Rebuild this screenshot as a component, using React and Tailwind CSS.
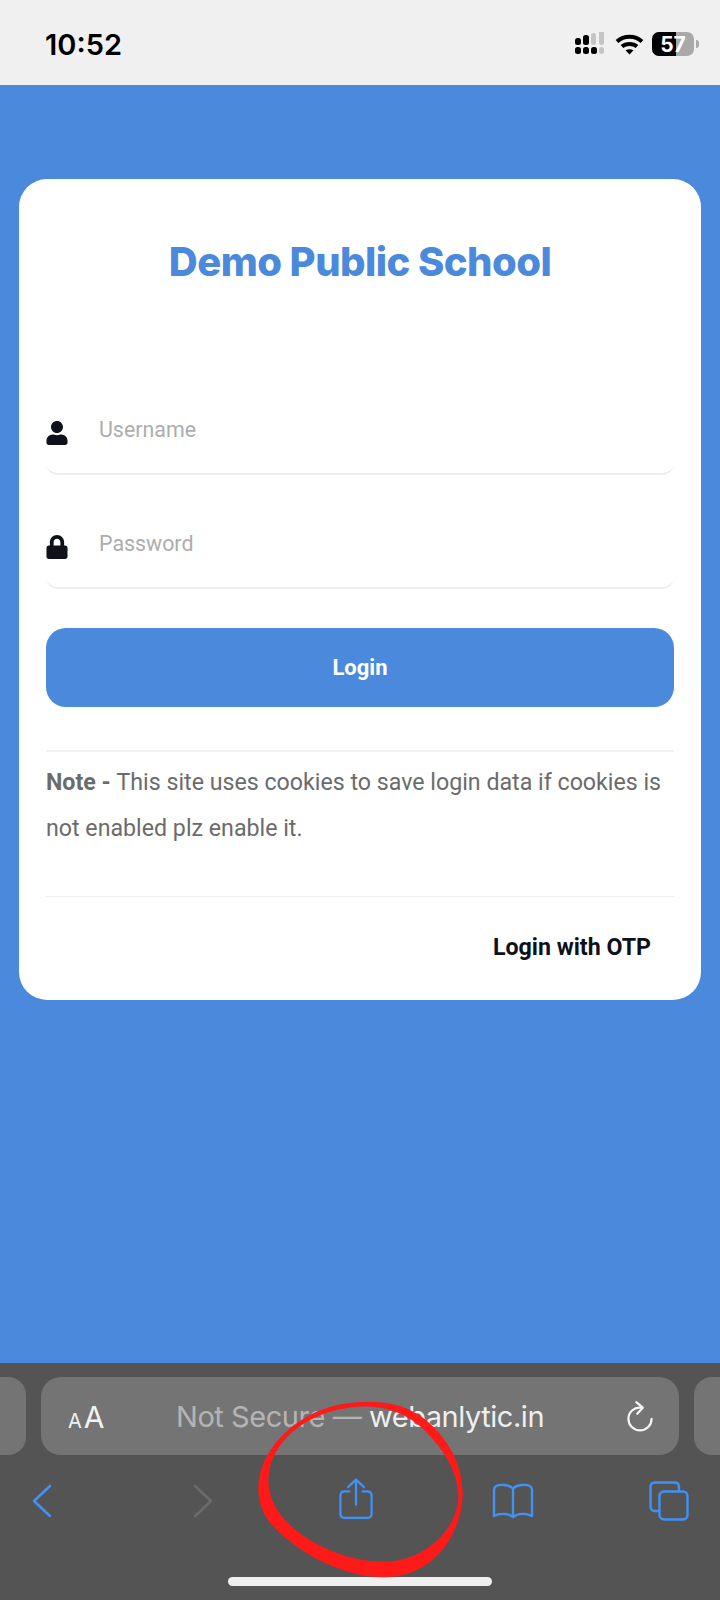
import React from "react";
import { FaUser, FaLock } from "react-icons/fa";

function StatusIcons() {
  return (
    <div className="flex items-center">
      <svg width="32" height="24" viewBox="0 0 32 24" className="mr-[9px]">
        <g fill="#000">
          <rect x="1" y="15" width="6" height="7" rx="2.5" />
          <rect x="9" y="15" width="6" height="7" rx="2.5" />
          <rect x="17" y="15" width="6" height="7" rx="2.5" />
          <rect x="1" y="6" width="6" height="7" rx="2.5" />
          <rect x="9" y="3" width="6" height="10" rx="2.5" />
        </g>
        <g fill="#c4c4c4">
          <rect x="17" y="1" width="5" height="12" rx="2.5" />
          <rect x="25" y="-2" width="5" height="15" rx="2.5" />
          <rect x="25" y="15" width="5" height="7" rx="2.5" />
        </g>
      </svg>
      <svg width="29" height="21" viewBox="0 0 29 21" className="mr-[8px]" fill="none" stroke="#000" strokeWidth="4">
        <path d="M2 7.5C9 1 20 1 27 7.5" />
        <path d="M7 12.5C11 9 18 9 22 12.5" />
        <path d="M14.5 20.5L10.5 16.3C13 14.8 16 14.8 18.5 16.3Z" fill="#000" stroke="none" />
      </svg>
      <div className="relative w-[42px] h-[24px] rounded-[7px] bg-[#a9a9a9] overflow-hidden">
        <div className="w-[24px] h-full bg-black" />
        <span className="absolute inset-0 flex items-center justify-center text-white text-[21px] font-bold font-['Inter',sans-serif] leading-none">57</span>
      </div>
      <div className="ml-[2px] w-[3px] h-[8px] rounded-r-full bg-[#a9a9a9]" />
    </div>
  );
}

function Field({ icon, placeholder, className }) {
  return (
    <div className={`flex items-center h-[88px] border-b-2 border-[#eeeeee] rounded-[12px] ${className}`}>
      <span className="w-[54px] -ml-[1px] mt-[6px] text-[#0f111a] text-[24px]">{icon}</span>
      <input
        placeholder={placeholder}
        readOnly
        className="flex-1 min-w-0 bg-transparent outline-none text-[21.4px] placeholder:text-[#adadad] font-['Roboto',sans-serif]"
      />
    </div>
  );
}

export default function App() {
  return (
    <div className="relative h-[1600px] w-[720px] overflow-hidden flex flex-col bg-[#4a89dc] font-['Roboto',sans-serif]">
      <header className="h-[85px] shrink-0 bg-[#f0f0f0] flex items-center justify-between pl-[45px] pr-[21px] pt-[3px]">
        <span className="text-[29px] font-semibold text-black font-['Inter',sans-serif] leading-none">10:52</span>
        <StatusIcons />
      </header>

      <main className="flex-1 min-h-0 pt-[94px] px-[19px]">
        <section className="h-[821px] bg-white rounded-[28px] px-[27px] pt-[53px]">
          <h1 className="text-center text-[40px] leading-[60px] font-extrabold tracking-[-0.55px] whitespace-nowrap text-[#4a89dc] font-['Inter',sans-serif]">
            Demo Public School
          </h1>
          <Field className="mt-[95px]" icon={<FaUser />} placeholder="Username" />
          <Field className="mt-[26px]" icon={<FaLock />} placeholder="Password" />
          <button className="mt-[39px] w-full h-[79px] rounded-[20px] bg-[#4a89dc] text-white text-[22px] font-bold leading-none pt-[1px]">
            Login
          </button>
          <div className="mt-[43px] border-t-2 border-[#f1f1f1] pt-[7px] pb-[45px] text-[23.2px] leading-[46px] text-[#6b6b6b]">
            <b className="font-bold">Note - </b>This site uses cookies to save login data if cookies is not enabled plz enable it.
          </div>
          <div className="border-t border-[#eeeeee] flex justify-end pr-[23px] pt-[34px]">
            <span className="text-[23.2px] leading-[32px] font-bold text-[#0f111a]">Login with OTP</span>
          </div>
        </section>
      </main>

      <footer className="h-[237px] shrink-0 bg-[#545454] pt-[14px] flex flex-col">
        <div className="flex gap-[15px] h-[78px]">
          <div className="w-[26px] rounded-r-[18px] bg-[#747474]" />
          <div className="w-[638px] rounded-[20px] bg-[#747474] flex items-center pl-[27px] pr-[26px]">
            <span className="w-[108px] flex items-baseline text-[#f2f2f2] font-['Inter',sans-serif] leading-none pt-[2px]">
              <span className="text-[20px] mr-[2px]">A</span>
              <span className="text-[30px]">A</span>
            </span>
            <span className="flex-1 whitespace-nowrap text-[29px] leading-none font-['Inter',sans-serif] text-[#b4b4b4] tracking-[-0.45px]">
              Not Secure — <span className="text-[#efefef]">webanlytic.in</span>
            </span>
            <svg width="26" height="33" viewBox="0 0 28 34" fill="none" stroke="#f5f5f5" strokeWidth="2.4" strokeLinecap="round" strokeLinejoin="round">
              <path d="M15 7.5C7.5 6.5 1.5 12.5 1.5 19.5C1.5 26.5 7 32 14 32C21 32 26.5 26.5 26.5 19.5" />
              <path d="M10 1.5L17 7.5L11 14" />
            </svg>
          </div>
          <div className="w-[26px] rounded-l-[18px] bg-[#747474]" />
        </div>

        <div className="flex items-start pl-[32px] mt-[26px] h-[42px]">
          <svg width="20" height="34" viewBox="0 0 20 34" className="mt-[3px]" fill="none" stroke="#4291f3" strokeWidth="2.6" strokeLinecap="round" strokeLinejoin="round">
            <path d="M18 2L2 17L18 32" />
          </svg>
          <svg width="20" height="34" viewBox="0 0 20 34" className="ml-[141px] mt-[3px]" fill="none" stroke="#6b6b6b" strokeWidth="2.6" strokeLinecap="round" strokeLinejoin="round">
            <path d="M2 2L18 17L2 32" />
          </svg>
          <svg width="34" height="42" viewBox="0 0 36 44" className="ml-[126px] -mt-[3px]" fill="none" stroke="#4291f3" strokeWidth="2.4" strokeLinecap="round" strokeLinejoin="round">
            <path d="M11 14H6C3 14 1.5 15.5 1.5 18.5V37.5C1.5 40.5 3 42 6 42H30C33 42 34.5 40.5 34.5 37.5V18.5C34.5 15.5 33 14 30 14H25" />
            <path d="M18 28V2" />
            <path d="M9.5 9.5L18 1.5L26.5 9.5" />
          </svg>
          <svg width="42" height="36" viewBox="0 0 42 36" className="ml-[119px] mt-[2px]" fill="none" stroke="#4291f3" strokeWidth="2.4" strokeLinecap="round" strokeLinejoin="round">
            <path d="M21 5.5C17 1.5 8 1 4 3C2.5 4 2 5 2 7V33C8 30 16 30 21 34C26 30 34 30 40 33V7C40 5 39.5 4 38 3C34 1 25 1.5 21 5.5Z" />
            <path d="M21 5.5V34" />
          </svg>
          <svg width="40" height="40" viewBox="0 0 40 40" className="ml-[115px]" fill="none" stroke="#4291f3" strokeWidth="2.4" strokeLinejoin="round">
            <path d="M10 30H6C3 30 1.5 28.5 1.5 25.5V6C1.5 3 3 1.5 6 1.5H25.5C28.5 1.5 30 3 30 6V10" />
            <rect x="10.5" y="10.5" width="28" height="28" rx="4.5" />
          </svg>
        </div>

        <div className="mt-auto mb-[14px] mx-auto w-[264px] h-[9px] rounded-full bg-[#efefef]" />
      </footer>

      <svg
        className="absolute left-[240px] top-[1380px] w-[240px] h-[210px] pointer-events-none"
        viewBox="0 0 720 630"
      >
        <path
          fillRule="evenodd"
          fill="#ff1a1a"
          d="M55 325C55 230 130 140 230 95C300 65 400 55 480 78C580 110 668 220 668 340C668 450 590 592 430 592C320 592 190 530 105 445C70 410 55 370 55 325ZM85 300C88 200 170 125 270 95C360 70 450 70 530 130C600 190 655 270 655 350C655 440 560 545 430 545C320 545 200 490 135 420C100 380 85 340 85 300Z"
        />
      </svg>
    </div>
  );
}
